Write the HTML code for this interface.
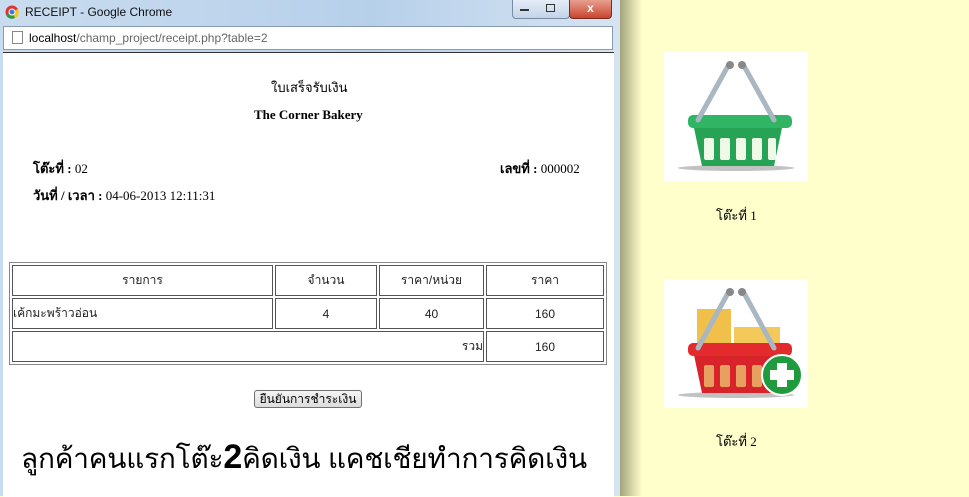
<!DOCTYPE html>
<html><head><meta charset="utf-8"><style>
body{margin:0;width:969px;height:496px;background:#ffffcc;position:relative;overflow:hidden;font-family:"Liberation Serif","Noto Serif CJK SC",serif;}
.win{position:absolute;left:0;top:0;width:620px;height:496px;background:linear-gradient(90deg,#c9dcef,#b7d0ea 60%,#d6e4f2);}
.shadow{position:absolute;left:620px;top:0;width:22px;height:496px;background:linear-gradient(90deg,rgba(90,90,60,.55),rgba(255,255,204,0));}
.title{position:absolute;left:25px;top:5px;font:12px "Liberation Sans",sans-serif;color:#111;}
.addr{position:absolute;left:3px;top:26px;width:610px;height:24px;background:#fff;border:1px solid #8a9bb0;box-sizing:border-box;font:12px "Liberation Sans",sans-serif;line-height:22px;}
.content{position:absolute;left:3px;top:52px;width:611px;height:444px;background:#fff;border-top:1px solid #333;}
.t{position:absolute;font-size:13px;color:#000;white-space:nowrap;}
table{position:absolute;left:9px;top:262px;width:598px;border:1px solid #888;border-spacing:2px;font-family:"Liberation Sans","Noto Sans CJK SC",sans-serif;font-size:12px;}
td{border:1px solid #555;height:29px;padding:0;text-align:center;color:#222;}
.btn{position:absolute;left:254px;top:390px;width:108px;height:18px;border:1px solid #707070;border-radius:3px;background:linear-gradient(#f4f4f4,#dcdcdc);font:12px "Liberation Sans","Noto Sans CJK SC",sans-serif;text-align:center;line-height:17px;box-sizing:border-box;}
.big{position:absolute;left:21px;top:437px;font:28px "Liberation Sans","Noto Sans CJK SC",sans-serif;color:#000;white-space:nowrap;letter-spacing:-0.2px;}
</style></head><body>
<div class="win">
<svg style="position:absolute;left:5px;top:5px" width="14" height="14"><circle cx="7" cy="7" r="6.5" fill="#d33"/><path d="M7 7 L1 10 A6.5 6.5 0 0 0 10 13 Z" fill="#2a9d3a"/><path d="M7 7 L10 13 A6.5 6.5 0 0 0 13 4 Z" fill="#f5c518"/><circle cx="7" cy="7" r="3" fill="#3a7bd5" stroke="#fff"/></svg>
<div class="title">RECEIPT - Google Chrome</div>
<div style="position:absolute;left:512px;top:0;width:56px;height:18px;border:1px solid #7a8ca3;border-top:none;border-radius:0 0 4px 4px;background:linear-gradient(#e4edf7,#c3d4e8);"></div>
<div style="position:absolute;left:520px;top:9px;width:9px;height:2px;background:#333"></div>
<div style="position:absolute;left:546px;top:4px;width:7px;height:6px;border:1px solid #333"></div>
<div style="position:absolute;left:569px;top:0;width:41px;height:18px;border:1px solid #7a2a20;border-top:none;border-radius:0 0 4px 4px;background:linear-gradient(#e8a090,#c8452f);color:#fff;font:bold 12px 'Liberation Sans',sans-serif;text-align:center;line-height:16px;">x</div>
<div class="addr"><span style="display:inline-block;width:9px;height:11px;border:1px solid #888;margin:0 6px 0 8px;vertical-align:-2px"></span><span style="color:#000">localhost</span><span style="color:#666">/champ_project/receipt.php?table=2</span></div>
<div class="content"></div>
</div>
<div class="shadow"></div>
<div class="t" style="left:271px;top:77px;">ใบเสร็จรับเงิน</div>
<div class="t" style="left:254px;top:107px;font-weight:bold;">The Corner Bakery</div>
<div class="t" style="left:33px;top:158px;"><b>โต๊ะที่ :</b> 02</div>
<div class="t" style="left:500px;top:158px;"><b>เลขที่ :</b> 000002</div>
<div class="t" style="left:33px;top:185px;"><b>วันที่ / เวลา :</b> 04-06-2013 12:11:31</div>
<table>
<tr><td style="width:259px">รายการ</td><td style="width:100px">จำนวน</td><td style="width:103px">ราคา/หน่วย</td><td>ราคา</td></tr>
<tr><td style="text-align:left">เค้กมะพร้าวอ่อน</td><td>4</td><td>40</td><td>160</td></tr>
<tr><td colspan="3" style="text-align:right">รวม</td><td>160</td></tr>
</table>
<div class="btn">ยืนยันการชำระเงิน</div>
<div class="big">ลูกค้าคนแรกโต๊ะ<b style="font-size:34px">2</b>คิดเงิน แคชเชียทำการคิดเงิน</div>

<svg style="position:absolute;left:664px;top:52px" width="144" height="129">
<rect width="144" height="129" fill="#fff"/>
<ellipse cx="72" cy="116" rx="58" ry="3" fill="#999" opacity=".6"/>
<path d="M30 76 L118 76 L110 114 L38 114 Z" fill="#27a356"/>
<g fill="#eef9e8"><rect x="40" y="86" width="10" height="22" rx="2"/><rect x="56" y="86" width="10" height="22" rx="2"/><rect x="72" y="86" width="10" height="22" rx="2"/><rect x="88" y="86" width="10" height="22" rx="2"/><rect x="104" y="86" width="8" height="22" rx="2"/></g>
<rect x="24" y="63" width="104" height="13" rx="5" fill="#2fb563"/>
<path d="M34 68 L64 14 M110 68 L80 14" stroke="#a9b7c3" stroke-width="5" stroke-linecap="round"/>
<circle cx="66" cy="13" r="4" fill="#888"/><circle cx="78" cy="13" r="4" fill="#888"/>
</svg>
<div class="t" style="left:716px;top:205px;">โต๊ะที่ 1</div>

<svg style="position:absolute;left:664px;top:279px" width="144" height="129">
<rect width="144" height="129" fill="#fff"/>
<ellipse cx="72" cy="116" rx="58" ry="3" fill="#999" opacity=".6"/>
<rect x="33" y="30" width="34" height="40" fill="#f0c04a"/><rect x="70" y="48" width="46" height="24" fill="#f3c95a"/>
<path d="M30 76 L118 76 L110 114 L38 114 Z" fill="#d8232a"/>
<g fill="#e8a060"><rect x="40" y="86" width="10" height="22" rx="2"/><rect x="56" y="86" width="10" height="22" rx="2"/><rect x="72" y="86" width="10" height="22" rx="2"/><rect x="88" y="86" width="10" height="22" rx="2"/></g>
<rect x="24" y="64" width="104" height="13" rx="5" fill="#e32b2e"/>
<path d="M34 69 L64 14 M110 69 L80 14" stroke="#a9b7c3" stroke-width="5" stroke-linecap="round"/>
<circle cx="66" cy="13" r="4" fill="#888"/><circle cx="78" cy="13" r="4" fill="#888"/>
<circle cx="118" cy="96" r="20" fill="#1f9a3c" stroke="#fff" stroke-width="2"/>
<path d="M113 84h10v7h7v10h-7v7h-10v-7h-7v-10h7z" fill="#fff"/>
</svg>
<div class="t" style="left:716px;top:431px;">โต๊ะที่ 2</div>
</body></html>
